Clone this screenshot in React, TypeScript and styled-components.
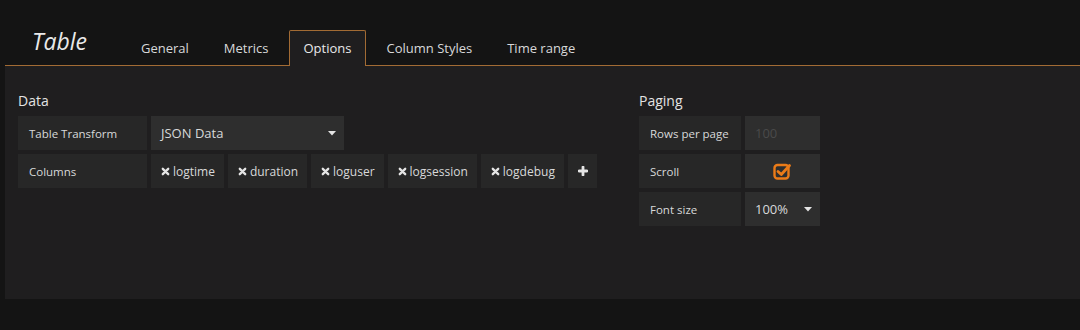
import React from "react";
import styled, { createGlobalStyle } from "styled-components";

const GlobalStyle = createGlobalStyle`
  html, body {
    margin: 0;
    padding: 0;
    background: #141414;
  }
  body {
    font-family: "Open Sans", "Liberation Sans", sans-serif;
    color: #d8d9da;
    width: 1080px;
    height: 330px;
    overflow: hidden;
  }
`;

const columns = ["logtime", "duration", "loguser", "logsession", "logdebug"];
const tabs = ["General", "Metrics", "Options", "Column Styles", "Time range"];

const TimesIcon = () => (
  <svg width="9" height="9" viewBox="0 0 10 10">
    <path d="M2 2 L8 8 M8 2 L2 8" stroke="#e4e4e4" strokeWidth="2.6" strokeLinecap="round" />
  </svg>
);

const PlusIcon = () => (
  <svg width="10" height="10" viewBox="0 0 10 10">
    <path d="M5 1 V9 M1 5 H9" stroke="#e4e4e4" strokeWidth="2.8" strokeLinecap="round" />
  </svg>
);

const Caret = () => (
  <svg width="8" height="5" viewBox="0 0 8 5">
    <path d="M0 0 H8 L4 4.5 Z" fill="#e4e4e4" />
  </svg>
);

const CheckIcon = () => (
  <svg width="19" height="18" viewBox="0 0 19 18">
    <rect x="1.5" y="3" width="14" height="13.5" rx="3" fill="none" stroke="#eb7b18" strokeWidth="2.4" />
    <path d="M5 9.5 L8.3 12.5 L16.5 3.5" fill="none" stroke="#eb7b18" strokeWidth="2.8" strokeLinecap="round" strokeLinejoin="round" />
  </svg>
);

export default function App() {
  return (
    <>
      <GlobalStyle />
      <Header>
        <Title>Table</Title>
        <Tabs>
          {tabs.map((t) => (
            <Tab key={t} $active={t === "Options"}>
              {t}
            </Tab>
          ))}
        </Tabs>
      </Header>
      <Panel>
        <Section $width={621}>
          <SectionTitle>Data</SectionTitle>
          <Row>
            <Label $width={129}>Table Transform</Label>
            <Select $width={193}>
              JSON Data
              <Caret />
            </Select>
          </Row>
          <Row>
            <Label $width={129}>Columns</Label>
            {columns.map((c) => (
              <Tag key={c}>
                <TimesIcon />
                {c}
              </Tag>
            ))}
            <Tag>
              <PlusIcon />
            </Tag>
          </Row>
        </Section>
        <Section>
          <SectionTitle>Paging</SectionTitle>
          <Row>
            <Label $width={102}>Rows per page</Label>
            <Input $width={75} $muted>100</Input>
          </Row>
          <Row>
            <Label $width={102}>Scroll</Label>
            <Input $width={75} $center>
              <CheckIcon />
            </Input>
          </Row>
          <Row>
            <Label $width={102}>Font size</Label>
            <Select $width={75}>
              100%
              <Caret />
            </Select>
          </Row>
        </Section>
      </Panel>
    </>
  );
}

const Header = styled.div`
  display: flex;
  align-items: flex-end;
  height: 65px;
  margin-left: 5px;
  border-bottom: 1px solid #a26b34;
`;

const Title = styled.div`
  font-style: italic;
  font-size: 23px;
  color: #e9e9e9;
  padding: 0 0 0 27px;
  width: 94px;
  align-self: flex-start;
  margin-top: 25px;
`;

const Tabs = styled.div`
  display: flex;
  gap: 5px;
`;

const Tab = styled.div<{ $active?: boolean }>`
  height: 34px;
  padding: 0 14px 1px;
  display: flex;
  align-items: center;
  font-size: 13px;
  white-space: nowrap;
  color: ${(p) => (p.$active ? "#e9e9e9" : "#d8d9da")};
  margin-bottom: -1px;
  border: 1px solid ${(p) => (p.$active ? "#a26b34" : "transparent")};
  border-bottom: none;
  border-radius: 2px 2px 0 0;
  background: ${(p) => (p.$active ? "#1f1e1f" : "transparent")};
`;

const Panel = styled.div`
  margin-left: 5px;
  height: 233px;
  background: #1f1e1f;
  box-sizing: border-box;
  padding: 25px 13px;
  display: flex;
`;

const Section = styled.div<{ $width?: number }>`
  display: flex;
  flex-direction: column;
  gap: 4px;
  width: ${(p) => (p.$width ? `${p.$width}px` : "auto")};
`;

const SectionTitle = styled.div`
  font-size: 14px;
  color: #e3e3e3;
  line-height: 20px;
  margin-bottom: 1px;
`;

const Row = styled.div`
  display: flex;
  gap: 4px;
  height: 34px;
`;

const Label = styled.div<{ $width: number }>`
  width: ${(p) => p.$width}px;
  box-sizing: border-box;
  padding: 0 11px;
  background: #272727;
  font-size: 11.5px;
  white-space: nowrap;
  display: flex;
  align-items: center;
  color: #d8d9da;
`;

const Select = styled.div<{ $width: number }>`
  width: ${(p) => p.$width}px;
  box-sizing: border-box;
  padding: 0 8px 0 10px;
  background: #2e2e2e;
  font-size: 13px;
  display: flex;
  align-items: center;
  justify-content: space-between;
  color: #d8d9da;
`;

const Input = styled.div<{ $width: number; $muted?: boolean; $center?: boolean }>`
  width: ${(p) => p.$width}px;
  box-sizing: border-box;
  padding: 0 10px;
  background: #2e2e2e;
  font-size: 13px;
  display: flex;
  align-items: center;
  justify-content: ${(p) => (p.$center ? "center" : "flex-start")};
  color: ${(p) => (p.$muted ? "#4a4a4a" : "#d8d9da")};
`;

const Tag = styled.div`
  padding: 0 9px 0 10px;
  background: #272727;
  font-size: 12px;
  white-space: nowrap;
  display: flex;
  align-items: center;
  gap: 3px;
  color: #d8d9da;
`;
